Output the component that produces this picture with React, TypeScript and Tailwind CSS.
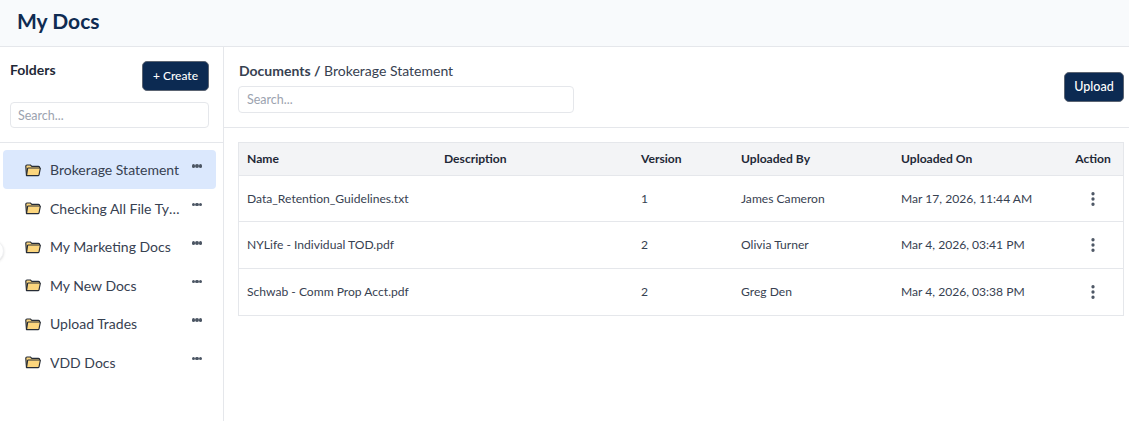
import { MoreVertical } from "lucide-react";

const folders = [
  "Brokerage Statement",
  "Checking All File Types",
  "My Marketing Docs",
  "My New Docs",
  "Upload Trades",
  "VDD Docs",
];

const docs = [
  { name: "Data_Retention_Guidelines.txt", version: 1, by: "James Cameron", on: "Mar 17, 2026, 11:44 AM" },
  { name: "NYLife - Individual TOD.pdf", version: 2, by: "Olivia Turner", on: "Mar 4, 2026, 03:41 PM" },
  { name: "Schwab - Comm Prop Acct.pdf", version: 2, by: "Greg Den", on: "Mar 4, 2026, 03:38 PM" },
];

function FolderIcon() {
  return (
    <svg width="16" height="14" viewBox="0 0 16 14" className="shrink-0">
      <path
        d="M1.5 12.5 L0.8 3.2 Q0.8 2 2 2 H5.5 L6.8 3.3 H13.5 Q14.6 3.3 14.5 4.4 V5"
        fill="#fcd67e"
        stroke="#262c36"
        strokeWidth="1.2"
      />
      <path
        d="M1.5 12.6 L2.6 5.4 Q2.7 5 3.2 5 H15 Q15.4 5 15.3 5.5 L14 12 Q13.9 12.6 13.3 12.6 Z"
        fill="#fcd67e"
        stroke="#262c36"
        strokeWidth="1.2"
        strokeLinejoin="round"
      />
    </svg>
  );
}

function Dots() {
  return (
    <span className="flex">
      <span className="w-[3.5px] h-[3.5px] rounded-full bg-[#4b5563]" />
      <span className="w-[3.5px] h-[3.5px] rounded-full bg-[#4b5563]" />
      <span className="w-[3.5px] h-[3.5px] rounded-full bg-[#4b5563]" />
    </span>
  );
}

export default function App() {
  return (
    <div className="relative w-[1129px] h-[421px] overflow-hidden bg-white font-['Lato',sans-serif] text-[#1f2937]">
      <header className="h-[47px] bg-[#f8fafc] border-b border-[#e5e7eb] pl-[17px] flex items-center">
        <h1 className="text-[21px] font-bold text-[#0f2b52] leading-none pb-[6px]">My Docs</h1>
      </header>

      <div className="flex h-[374px]">
        <aside className="w-[224px] shrink-0 border-r border-[#e5e7eb]">
          <div className="h-[96px] border-b border-[#e5e7eb] px-[10px] pt-[14px] pr-[14px]">
            <div className="flex justify-between items-start">
              <span className="text-[14px] font-bold text-[#1f2937] leading-[18px]">Folders</span>
              <button className="w-[67px] h-[30px] rounded-[5px] bg-[#0c2a52] border border-[#5b6472] text-white text-[12px] font-medium">
                + Create
              </button>
            </div>
            <input
              placeholder="Search..."
              className="mt-[11px] w-[199px] h-[26px] px-[7px] rounded-[4px] border border-[#e5e7eb] text-[12.5px] placeholder:text-[#9ca3af] outline-none"
            />
          </div>

          <ul className="pt-[7px] pl-[3px] pr-[7px]">
            {folders.map((f, i) => (
              <li
                key={f}
                className={`h-[38.5px] flex items-center pt-px pl-[22px] pr-[14px] rounded-[4px] ${i === 0 ? "bg-[#dbe8fd]" : ""}`}
              >
                <FolderIcon />
                <span className="ml-[9px] w-[133px] truncate text-[14px] text-[#374151]">{f}</span>
                <span className="ml-auto pb-[8px]">
                  <Dots />
                </span>
              </li>
            ))}
          </ul>
        </aside>

        <main className="flex-1 min-w-0">
          <div className="h-[81px] border-b border-[#e5e7eb] pl-[14px] pr-[5px] flex items-center justify-between">
            <div className="pt-[1px]">
              <div className="pl-px text-[14px] leading-[18px] text-[#374151]">
                <span className="font-bold">Documents /</span> Brokerage Statement
              </div>
              <input
                placeholder="Search..."
                className="mt-[6px] block w-[336px] h-[27px] px-[8px] rounded-[4px] border border-[#e5e7eb] text-[12.5px] placeholder:text-[#9ca3af] outline-none"
              />
            </div>
            <button className="w-[60px] h-[30px] rounded-[5px] bg-[#0c2a52] border border-[#5b6472] text-white text-[12.5px] font-medium">
              Upload
            </button>
          </div>

          <div className="ml-[14px] mr-[5px] mt-[14px] border border-[#e5e7eb]">
            <table className="w-full table-fixed text-[12.1px] text-[#374151]">
              <colgroup>
                <col className="w-[197px]" />
                <col className="w-[197px]" />
                <col className="w-[100px]" />
                <col className="w-[160px]" />
                <col className="w-[170px]" />
                <col />
              </colgroup>
              <thead>
                <tr className="h-[32px] bg-[#f3f4f6] border-b border-[#e5e7eb] text-left font-bold text-[#1f2937]">
                  <th className="px-2">Name</th>
                  <th className="px-2">Description</th>
                  <th className="px-2">Version</th>
                  <th className="px-2">Uploaded By</th>
                  <th className="px-2">Uploaded On</th>
                  <th className="px-2 text-center">Action</th>
                </tr>
              </thead>
              <tbody>
                {docs.map((d, i) => (
                  <tr key={d.name} className={`h-[46.5px] ${i < docs.length - 1 ? "border-b border-[#e5e7eb]" : ""}`}>
                    <td className="px-2 pt-px truncate">{d.name}</td>
                    <td className="px-2" />
                    <td className="px-2 pt-px">{d.version}</td>
                    <td className="px-2 pt-px">{d.by}</td>
                    <td className="px-2 pt-px whitespace-nowrap">{d.on}</td>
                    <td className="px-2 pt-px">
                      <MoreVertical size={18} strokeWidth={2.4} className="mx-auto text-[#4b5563]" />
                    </td>
                  </tr>
                ))}
              </tbody>
            </table>
          </div>
        </main>
      </div>

      {/* sidebar collapse handle, mostly off-screen */}
      <div className="absolute left-[-18px] top-[240px] w-[22px] h-[22px] rounded-full bg-white border border-[#f0f1f3] shadow-sm" />
    </div>
  );
}
